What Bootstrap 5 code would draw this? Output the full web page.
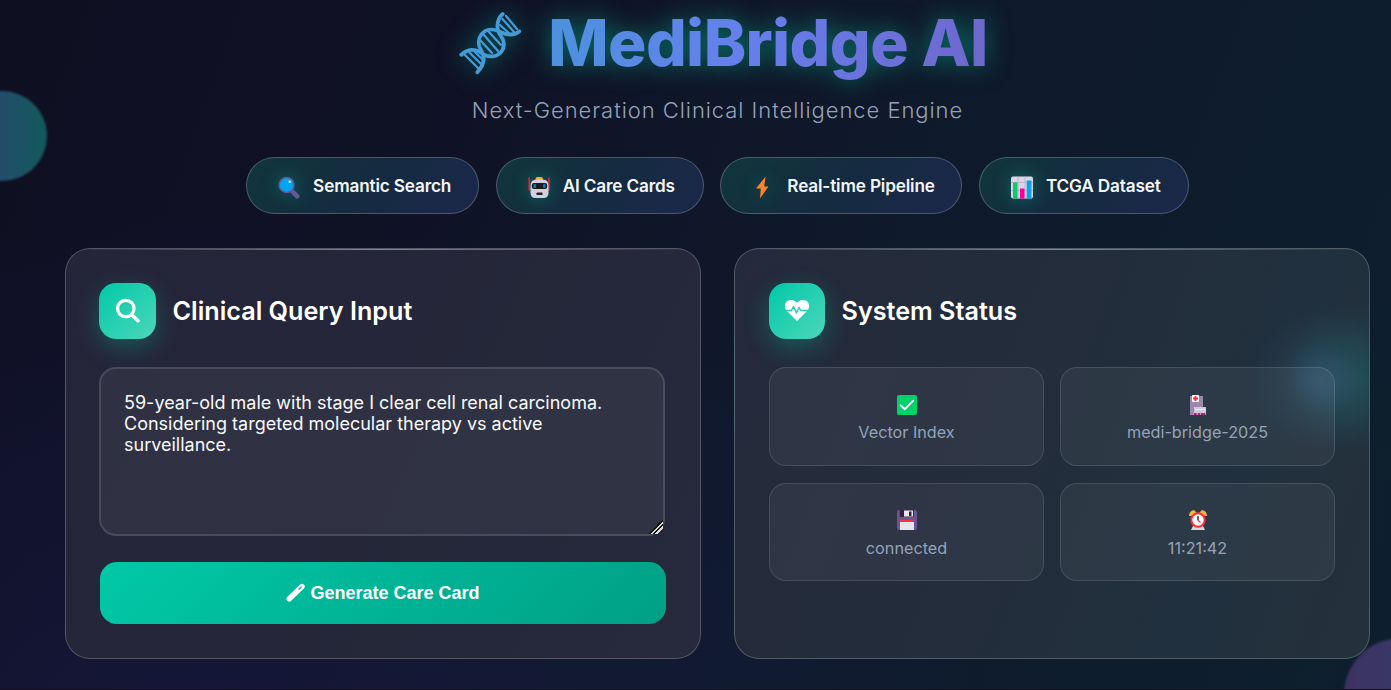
<!DOCTYPE html>
<html lang="en">
<head>
<meta charset="utf-8">
<meta name="viewport" content="width=device-width, initial-scale=1">
<title>MediBridge AI</title>
<link href="https://cdn.jsdelivr.net/npm/bootstrap@5.3.0/dist/css/bootstrap.min.css" rel="stylesheet">
<style>
body{font-family:Inter,"Liberation Sans",sans-serif;color:#fff;height:690px;overflow:hidden;position:relative;
background:radial-gradient(ellipse at 15% 105%,rgba(32,36,100,.3),transparent 50%),linear-gradient(110deg,#0f0f22 0%,#0f1125 25%,#0f182a 52%,#0e1c2d 78%,#0d1f2e 100%)}
.backdrop{position:absolute;inset:0;overflow:hidden}
.orb{position:absolute;border-radius:50%;filter:blur(1px)}
.orb-left{left:-43px;top:91px;width:90px;height:90px;background:linear-gradient(90deg,#3d3766,#224d6b 50%,#125a5b)}
.orb-right{left:1344px;top:638px;width:114px;height:114px;background:linear-gradient(90deg,#3d3363,#363b68)}
.page{position:relative;width:1305px;margin-left:65px;height:690px}
.brand{height:86px;padding:1px 0 0 12px;filter:drop-shadow(0 0 12px rgba(0,201,167,.5))}
.brand h1{font-size:64px;font-weight:800;line-height:84px;letter-spacing:-.6px;white-space:nowrap;margin-left:25px;
background:linear-gradient(110deg,#4b93dd 0%,#667fec 45%,#6f66cb 100%);-webkit-background-clip:text;background-clip:text;color:transparent}
.brand svg{width:64px;height:64px;margin-top:10px}
.tagline{font-size:22px;font-weight:300;line-height:30px;letter-spacing:.95px;color:#94a3b8;margin-top:9px}
.features{gap:16.6px;margin-top:32px}
.pill{height:57px;border:1px solid rgba(255,255,255,.22);border-radius:29px;background:linear-gradient(135deg,#11363a 0%,#142b40 50%,#1d274b 100%);font-size:17.2px;font-weight:600;letter-spacing:-.16px;color:#f3f6f9;white-space:nowrap;padding-left:30px}
.pill svg{width:24px;height:24px;margin-right:12px;flex:none;border-radius:50%;overflow:visible;filter:drop-shadow(0 0 9px rgba(0,201,167,.4))}
.panels{gap:33px;margin-top:34px}
.panel{position:relative;width:636px;height:411px;flex:none;border:1px solid rgba(255,255,255,.22);border-radius:25px;padding:34px 34px 34px 33px;overflow:hidden}
.panel::before{content:"";position:absolute;left:0;right:0;top:0;height:1px;background:linear-gradient(90deg,transparent,#00c9a7,transparent)}
.panel-query{background:linear-gradient(115deg,#252539 0%,#252639 45%,#242839 60%,#27293c 100%)}
.panel-status{padding-left:34px;padding-right:33px;background:radial-gradient(circle 70px at 586px 131px,rgba(70,110,150,.42),rgba(45,100,125,.15) 55%,transparent),radial-gradient(circle 75px at 622px 128px,rgba(30,120,120,.36),transparent),linear-gradient(110deg,#242a3b 0%,#232d3b 45%,#21303e 75%,#24303b 100%)}
.tile-icon{width:57px;height:56px;border-radius:17px;background:linear-gradient(135deg,#00c9a7,#4dd6bb);box-shadow:0 8px 25px rgba(0,201,167,.3)}
.panel-status .tile-icon{width:56px}
.panel h2{font-size:25.2px;font-weight:600;line-height:30px;margin:0 0 0 17px;position:relative;left:-.5px}
.query{display:block;width:566px;height:169px;margin-top:28px;border:2px solid rgba(255,255,255,.12);border-radius:17px;background:rgba(255,255,255,.055);padding:23px;font:400 18px/21px Inter,sans-serif;color:#f8fafc;resize:vertical;outline:0}
.query::-webkit-resizer{background:linear-gradient(135deg,transparent 50%,#111 50% 57%,#ddd 57% 65%,#111 65% 72%,#ddd 72% 80%,transparent 80%)}
.generate{width:566px;height:62px;margin:26px 0 0 1px;border:0;border-radius:17px;background:linear-gradient(135deg,#00c9a7,#00a085);color:#fff;font:700 18px "Liberation Sans",Arial,sans-serif}
.stats{display:grid;grid-template-columns:275px 275px;grid-template-rows:99px 98px;gap:17px 16px;margin-top:28px}
.stat{border:1px solid rgba(255,255,255,.12);border-radius:17px;background:rgba(255,255,255,.05);color:#94a3b8;font-size:16.2px;line-height:24px;padding-top:27px}
.stat svg{width:20px;height:20px;display:block;margin:0 auto 5px;overflow:visible}
.stat:nth-child(n+3) svg{margin-top:-1px;margin-bottom:6px}
.bottom-edge{position:absolute;left:0;right:0;bottom:0;height:1px;background:#160d1b}
</style>
</head>
<body>
<div class="backdrop"><div class="orb orb-left"></div><div class="orb orb-right"></div><div class="bottom-edge"></div></div>
<main class="page">
<header>
<div class="brand d-flex justify-content-center">
<svg viewBox="0 0 64 64" fill="none" stroke="#449bd6" stroke-width="3.8" stroke-linecap="round">
<path d="M43.7 3C37 9 37 19 42 25c9 13-5 26-18 18-9-6-15-5-21.700.7M60.300 20.300C54 26 46 23 39 20 25 14 15 28 22 39c5 8 3 15-3.700 22.300"/>
<path stroke-width="2.3" d="M43.500 8 55 21M41 14l10 9M47 5l11 13M29 20l13 14M24 23l15 17M21 29l12 13M5 43l15 15M10 41l12 12M16 41l8 8"/></svg>
<h1 class="mb-0">MediBridge AI</h1>
</div>
<p class="tagline text-center mb-0">Next-Generation Clinical Intelligence Engine</p>
<div class="features d-flex justify-content-center">
<div class="pill d-flex align-items-center" style="width:233px"><svg viewBox="0 0 24 24"><path d="m15 17 5.200 5.300" stroke="#69569a" stroke-width="4.500" stroke-linecap="round"/><circle cx="9.600" cy="11" r="7.500" fill="#00a5ed" stroke="#68539b" stroke-width="1.400"/><circle cx="12.800" cy="7.700" r="1.200" fill="#fff"/></svg>Semantic Search</div>
<div class="pill d-flex align-items-center" style="width:208px"><svg viewBox="0 0 24 24"><path d="M2.300 4v12M22 4v12" stroke="#db2634" stroke-width="1.700" stroke-linecap="round"/><rect x="8.500" y="3" width="7.500" height="4" rx="2" fill="#f3ac37"/><path d="M3.500 11.500q0-6 6-6h6q6 0 6 6v7q0 5.500-5 5.500H8.500q-5 0-5-5.500z" fill="#d5cfe1"/><rect x="4.800" y="9" width="15.400" height="6" rx="2.300" fill="#1c1c1c"/><path d="M7.700 10.300v3.500M17.300 10.300v3.500" stroke="#008ce4" stroke-width="2.200"/><rect x="9.500" y="18.500" width="6" height="2.600" rx=".7" fill="#252026"/></svg>AI Care Cards</div>
<div class="pill d-flex align-items-center" style="width:242px"><svg viewBox="0 0 24 24"><path d="M14.200 3 5 14.500h4.800L9 24.500 17.400 12.500h-4.200L14.500 3z" fill="#ff8328"/></svg>Real-time Pipeline</div>
<div class="pill d-flex align-items-center" style="width:210px"><svg viewBox="0 0 24 24"><rect x="1" y="2.500" width="22" height="22" rx="2" fill="#ddd5e5"/><path d="M8 2.500v22M15 2.500v22M1 8.500h22M1 16.500h22" stroke="#b7adc1" stroke-width=".8"/><path d="M3 8.500h4.500v16H3z" fill="#00ce69"/><path d="M10 14.500h4.500v10H10z" fill="#f9009b"/><path d="M16.700 6.500h4.800v18h-4.800z" fill="#00a5ed"/></svg>TCGA Dataset</div>
</div>
</header>
<div class="panels d-flex">
<section class="panel panel-query">
<div class="d-flex align-items-center"><span class="tile-icon d-flex align-items-center justify-content-center"><svg width="26" height="26" viewBox="0 0 26 26" fill="none" stroke="#fff"><circle cx="10.800" cy="10.500" r="8.200" stroke-width="3.300"/><path d="m16.500 16.500 6.500 6.300" stroke-width="3.600" stroke-linecap="round"/></svg></span><h2>Clinical Query Input</h2></div>
<textarea class="query" spellcheck="false">59-year-old male with stage I clear cell renal carcinoma. Considering targeted molecular therapy vs active surveillance.</textarea>
<button class="generate d-flex align-items-center justify-content-center" type="button"><svg class="me-1" width="20" height="20" viewBox="0 0 20 20"><path d="M3.300 15.800 16 3.500" stroke="#fff" stroke-width="5.400" stroke-linecap="round"/><path d="m12.500 6.500 3-2.800" stroke="#00b598" stroke-width="1.200"/></svg>Generate Care Card</button>
</section>
<section class="panel panel-status">
<div class="d-flex align-items-center"><span class="tile-icon d-flex align-items-center justify-content-center"><svg width="26" height="26" viewBox="0 0 26 26"><path d="M13 23 2.500 12.500C-1 8 1.500 2 7 2c3 0 5 1.500 6 3 1-1.500 3-3 6-3 5.500 0 8 6 4.500 10.500z" fill="#fff"/><path d="M1 12.500h6.500l2-4 3 6.500 2.500-5.500 1.700 3H25" fill="none" stroke="#29cdb0" stroke-width="1.500" stroke-linejoin="round"/></svg></span><h2>System Status</h2></div>
<div class="stats text-center">
<div class="stat"><svg viewBox="0 0 20 20"><rect width="20" height="20" rx="2" fill="#00d26a"/><path d="m3.800 10.500 4 3.700 8.500-8.500" fill="none" stroke="#fff" stroke-width="1.900" stroke-linecap="round"/></svg>Vector Index</div>
<div class="stat"><svg viewBox="0 0 20 20"><path d="M2 1h13v19H2z" fill="#9989aa"/><rect x="4" width="7" height="7" rx=".7" fill="#fff"/><path d="M7.500 1v5M5 3.500h5" stroke="#f92f34" stroke-width="1.800"/><path d="M6 12h12v6H6z" fill="#d2c8dc"/><path d="M7 14.500h10" stroke="#eee9f1" stroke-width="1"/><path d="M5 18h13v2H5z" fill="#a797b2"/><path d="M6 19h2.500M10 19h2M13 19h4" stroke="#b4257c" stroke-width="2"/></svg>medi-bridge-2025</div>
<div class="stat"><svg viewBox="0 0 20 20"><rect width="20" height="20" rx="2" fill="#675598"/><path d="M2.800 0h14v7h-14z" fill="#37203f"/><path d="M7 .5h9v6H7z" fill="#e8e6eb"/><path d="M12 1.500h2.500v4.500H12z" fill="#37203f"/><path d="M3 10h14v10H3z" fill="#e7e4e9"/><path d="M3 10h14v2H3z" fill="#f7313b"/></svg>connected</div>
<div class="stat"><svg viewBox="0 0 20 20"><path d="M1 6Q1 1 6 0l3 3-6 3zM19 6q0-5-5-6l-3 3 6 3z" fill="#f4b63b"/><path d="M5 16h10l2 4H3z" fill="#d9d7dc"/><circle cx="10" cy="10" r="6.700" fill="#fff" stroke="#f92f3a" stroke-width="2"/><path d="M10 6v4.500" stroke="#222" stroke-width="1.400"/><path d="m10 10.500 2.500 2" stroke="#f92f3a" stroke-width="1.200"/></svg>11:21:42</div>
</div>
</section>
</div>
</main>
<script src="https://cdn.jsdelivr.net/npm/bootstrap@5.3.0/dist/js/bootstrap.bundle.min.js"></script>
</body>
</html>
